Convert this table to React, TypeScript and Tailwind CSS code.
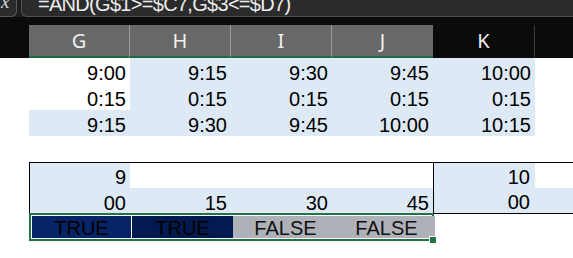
import React from 'react'

const font = { fontFamily: '"Liberation Sans", Arial, sans-serif' }

// column widths: row header, G, H, I, J, K, L
const cols = 'grid grid-cols-[29px_101px_101px_101px_101px_102px_1fr]'

const Num = ({ v, className = '' }: { v?: string; className?: string }) => (
  <div className={`flex items-center justify-end pr-[4px] pt-[3px] text-[20px] leading-none text-black ${className}`}>
    {v}
  </div>
)

const App = () => {
  const times = [
    ['9:00', '9:15', '9:30', '9:45', '10:00'],
    ['0:15', '0:15', '0:15', '0:15', '0:15'],
    ['9:15', '9:30', '9:45', '10:00', '10:15'],
  ]

  return (
    <div className="w-[573px] h-[258px] overflow-hidden bg-white" style={font}>
      {/* Formula bar */}
      <div className="flex h-[17px] bg-[#1e1e1e]">
        <div className="w-[17px] h-[17px] overflow-hidden bg-[#2b2b2b] border-r border-b border-[#5a5a5a] rounded-br-[6px]">
          <div className="-mt-[8px] pl-[1px] text-[19px] italic leading-none text-[#d8d8d8]" style={{ fontFamily: '"Liberation Serif", serif' }}>
            x
          </div>
        </div>
        <div className="ml-[4px] flex-1 h-[17px] overflow-hidden bg-[#2b2b2b] border-l border-b border-[#505050] rounded-bl-[6px]">
          <div className="-mt-[6px] pl-[16px] text-[20px] tracking-[-0.7px] leading-[20px] whitespace-nowrap text-[#ececec]">
            =AND(G$1&gt;=$C7,G$3&lt;=$D7)
          </div>
        </div>
      </div>
      <div className="h-[8px] bg-[#0b0b0b]" />

      {/* Column headers */}
      <div className={`${cols} h-[33px] bg-[#0b0b0b] text-[20px] text-[#f0f0f0]`} style={{ fontFamily: '"Noto Sans", "Open Sans", sans-serif' }}>
        <div />
        {['G', 'H', 'I', 'J'].map((c, i) => (
          <div
            key={c}
            className={`flex items-center justify-center bg-[#686868] border-b-2 border-[#1e6b41] ${i < 3 ? 'border-r border-r-[#9a9a9a]' : ''}`}
          >
            {c}
          </div>
        ))}
        <div className="flex items-center justify-center border-r border-[#3a3a3a] mb-[1px]">K</div>
        <div />
      </div>

      {/* Rows 1-3 */}
      {times.map((row, r) => (
        <div key={r} className={`${cols} h-[26px]`}>
          <div />
          <Num v={row[0]} className={r === 2 ? 'bg-[#dde9f5]' : ''} />
          {row.slice(1).map((v, i) => (
            <Num key={i} v={v} className="bg-[#dde9f5]" />
          ))}
          <div />
        </div>
      ))}

      <div className="h-[26px]" />

      {/* Row 5 */}
      <div className={`${cols} h-[26px]`}>
        <div />
        <Num v="9" className="bg-[#dde9f5] border-t border-l border-black" />
        <div className="border-t border-black" />
        <div className="border-t border-black" />
        <div className="border-t border-black" />
        <Num v="10" className="bg-[#dde9f5] border-t border-l border-black pr-[5px]" />
        <div className="border-t border-black" />
      </div>

      {/* Row 6 */}
      <div className={`${cols} h-[26px]`}>
        <div />
        <Num v="00" className="bg-[#dde9f5] border-l border-black" />
        <Num v="15" className="bg-[#dde9f5]" />
        <Num v="30" className="bg-[#dde9f5]" />
        <Num v="45" className="bg-[#dde9f5]" />
        <Num v="00" className="bg-[#dde9f5] border-l border-b border-black pr-[5px]" />
        <div className="bg-[#dde9f5] border-b border-black" />
      </div>

      {/* Row 7: selected range G7:J7 */}
      <div className={`${cols} h-[27px]`}>
        <div />
        <div className="col-span-4 -mt-[1px] w-[405px] h-[28px] relative border-2 border-[#217346] bg-white p-[1px]">
          <div className="grid grid-cols-[100px_101px_202px] h-full text-[20px] leading-none">
            <div className="flex items-center justify-center pt-[2px] bg-[#082468] border-r border-white text-black">TRUE</div>
            <div className="flex items-center justify-center pt-[2px] bg-[#021a50] text-black">TRUE</div>
            <div className="grid grid-cols-2 bg-[#aeb2b8] text-[#111]">
              <div className="flex items-center justify-center pt-[2px] pl-[4px]">FALSE</div>
              <div className="flex items-center justify-center pt-[2px] pl-[4px]">FALSE</div>
            </div>
          </div>
          <div className="absolute -right-[4px] -bottom-[4px] w-[6px] h-[6px] bg-[#217346] ring-1 ring-white" />
        </div>
        <div />
        <div />
      </div>
    </div>
  )
}

export default App
